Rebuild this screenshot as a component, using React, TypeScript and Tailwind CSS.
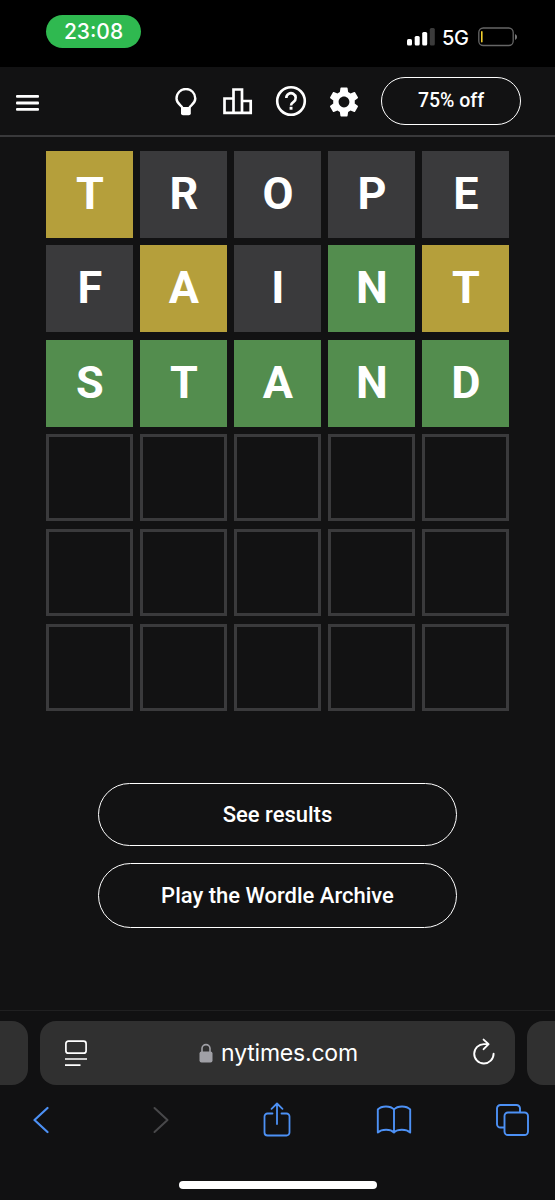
import clsx from 'clsx';

type TileState = 'present' | 'absent' | 'correct' | 'empty';

interface Tile {
  letter: string;
  state: TileState;
}

const EMPTY_ROW: Tile[] = Array.from({ length: 5 }, () => ({ letter: '', state: 'empty' }));

const rows: Tile[][] = [
  [
    { letter: 'T', state: 'present' },
    { letter: 'R', state: 'absent' },
    { letter: 'O', state: 'absent' },
    { letter: 'P', state: 'absent' },
    { letter: 'E', state: 'absent' },
  ],
  [
    { letter: 'F', state: 'absent' },
    { letter: 'A', state: 'present' },
    { letter: 'I', state: 'absent' },
    { letter: 'N', state: 'correct' },
    { letter: 'T', state: 'present' },
  ],
  [
    { letter: 'S', state: 'correct' },
    { letter: 'T', state: 'correct' },
    { letter: 'A', state: 'correct' },
    { letter: 'N', state: 'correct' },
    { letter: 'D', state: 'correct' },
  ],
  EMPTY_ROW,
  EMPTY_ROW,
  EMPTY_ROW,
];

const tileStyles: Record<TileState, string> = {
  present: 'bg-[#b59f3b]',
  absent: 'bg-[#3a3a3c]',
  correct: 'bg-[#538d4e]',
  empty: 'border-3 border-[#3a3a3c]',
};

function StatusBar() {
  return (
    <div className="flex h-[67px] items-start justify-between bg-black pl-[46px] pr-[37px] pt-[15px] font-['Inter',sans-serif]">
      <div className="flex h-[33px] w-[95px] items-center justify-center rounded-full bg-[#2fb950] pt-px text-[21px] font-medium">
        23:08
      </div>
      <div className="mt-[13px] flex h-[18px] items-center">
        <svg width="28" height="18" viewBox="0 0 28 18" fill="white">
          <rect x="0" y="11" width="5" height="6.5" rx="1.5" />
          <rect x="7.7" y="8" width="5" height="9.5" rx="1.5" />
          <rect x="15.2" y="4" width="5" height="13.5" rx="1.5" />
          <rect x="22.8" y="0" width="5" height="17.5" rx="1.5" fill="#3b3b3b" />
        </svg>
        <span className="ml-[7px] mt-px w-[28px] text-[20px] font-medium leading-none tracking-[-0.4px]">5G</span>
        <svg className="ml-2" width="40" height="20" viewBox="0 0 40 20" fill="none">
          <rect x="0.8" y="1" width="34.4" height="17.5" rx="4.5" stroke="#666" strokeWidth="1.3" />
          <rect x="3" y="4" width="1.6" height="11.5" rx="0.8" fill="#f2cf2e" />
          <path d="M37 7a3.2 3.2 0 0 1 0 6Z" fill="#777" />
        </svg>
      </div>
    </div>
  );
}

function Header() {
  return (
    <header className="flex h-[70px] items-center border-b-2 border-[#39393b] pl-4 pr-[34px]">
      <svg className="mt-[3px]" width="23" height="16" viewBox="0 0 23 16" fill="white">
        <rect width="23" height="2.8" rx="1" />
        <rect y="6.6" width="23" height="2.8" rx="1" />
        <rect y="13" width="23" height="2.8" rx="1" />
      </svg>
      <div className="ml-auto flex items-center">
        <svg className="mt-[2px]" width="22" height="28" viewBox="0 0 22 28" fill="none">
          <path
            d="M7.200 19.500C6.800 17.600 1.500 15.600 1.500 10.400a9.400 9.400 0 0 1 18.800 0c0 5.200-5.300 7.200-5.700 9.100"
            stroke="white"
            strokeWidth="2.400"
          />
          <path d="M6 19h9.800v6.200a2 2 0 0 1-2 2H8a2 2 0 0 1-2-2Z" fill="white" />
        </svg>
        <svg className="ml-[26px]" width="30" height="27" viewBox="0 0 30 27" fill="none" stroke="white" strokeWidth="2.700">
          <path d="M1.500 10.500h9v14.300h-9zM10.500 1.500h8.500v23.300h-8.500zM19 13h8.700v11.800H19z" />
        </svg>
        <svg className="ml-[22px]" width="32" height="32" viewBox="0 0 32 32" fill="none">
          <circle cx="16" cy="16" r="13.800" stroke="white" strokeWidth="2.600" />
          <path
            d="M11.300 12.900a4.700 4.700 0 1 1 7.300 3.900c-1.800 1.200-2.600 2-2.600 3.700"
            stroke="white"
            strokeWidth="2.600"
          />
          <rect x="14.600" y="21.800" width="2.900" height="2.900" fill="white" />
        </svg>
        <svg className="ml-[19px] mt-px" width="36" height="36" viewBox="0 0 24 24" fill="white">
          <path d="M19.140 12.940c.040-.300.060-.610.060-.940 0-.320-.020-.640-.070-.940l2.030-1.580a.49.49 0 0 0 .120-.610l-1.920-3.320a.488.488 0 0 0-.590-.220l-2.390.960c-.500-.380-1.030-.700-1.620-.940l-.360-2.540a.484.484 0 0 0-.480-.410h-3.840c-.240 0-.430.170-.470.410l-.360 2.540c-.590.240-1.130.570-1.620.940l-2.390-.960c-.220-.080-.470 0-.590.220L2.740 8.870c-.120.210-.080.470.120.610l2.030 1.580c-.050.300-.090.630-.090.940s.020.640.070.940l-2.030 1.580a.49.49 0 0 0-.120.610l1.920 3.320c.120.220.370.290.590.220l2.390-.960c.500.380 1.030.700 1.620.940l.360 2.540c.050.240.240.410.480.410h3.840c.240 0 .440-.170.470-.410l.360-2.540c.590-.240 1.130-.560 1.620-.940l2.390.960c.220.080.470 0 .590-.220l1.920-3.320c.120-.220.070-.470-.120-.610l-2.010-1.580zM12 15.600A3.610 3.610 0 0 1 8.400 12c0-1.980 1.620-3.600 3.600-3.600s3.600 1.620 3.600 3.600-1.620 3.600-3.600 3.600z" />
        </svg>
        <button className="ml-[19px] h-12 w-[140px] rounded-full border-[1.500px] border-white text-[19.500px] font-medium whitespace-nowrap">
          75% off
        </button>
      </div>
    </header>
  );
}

function Board() {
  return (
    <div className="mt-[13.500px] ml-[46.400px] grid w-[463px] grid-cols-5 gap-x-[7px] gap-y-[7.650px]">
      {rows.flat().map((tile, i) => (
        <div
          key={i}
          className={clsx(
            'flex h-[87px] items-center justify-center pb-[2px] text-[45px] leading-none font-bold',
            tileStyles[tile.state],
          )}
        >
          {tile.letter}
        </div>
      ))}
    </div>
  );
}

function BrowserBar() {
  return (
    <div className="mt-auto h-[190px] border-t border-[#202021] bg-[#111112] pt-[10px] font-['Inter',sans-serif]">
      <div className="flex h-16 gap-3">
        <div className="w-7 rounded-r-2xl bg-[#303030]" />
        <div className="flex w-[475px] items-center justify-between rounded-2xl bg-[#303030] pl-[25px] pr-[20px]">
          <svg width="22" height="27" viewBox="0 0 22 27" fill="none" stroke="white" strokeWidth="1.700">
            <rect x="0.900" y="1.200" width="20.200" height="12" rx="2.500" />
            <path d="M0 19h22M0 25.200h15.500" />
          </svg>
          <div className="mr-[3px] flex items-center">
            <svg width="14" height="20" viewBox="0 0 14 20" fill="none">
              <path d="M3 9V5.600a4 4 0 0 1 8 0V9" stroke="#a0a0a6" strokeWidth="1.600" />
              <rect x="0.500" y="8.500" width="13" height="11" rx="2" fill="#a0a0a6" />
            </svg>
            <span className="mt-px ml-2 text-[23px] leading-none tracking-[-0.200px]">nytimes.com</span>
          </div>
          <svg className="-mt-1" width="22" height="27" viewBox="0 0 22 27" fill="none" stroke="white" strokeWidth="1.900" strokeLinecap="round" strokeLinejoin="round">
            <path d="M20.600 15.800A9.700 9.700 0 1 1 11 6.100h4.500M10.600 1.600l5 4.500-5 5.100" />
          </svg>
        </div>
        <div className="w-7 rounded-l-2xl bg-[#303030]" />
      </div>
      <div className="mt-[17px] flex h-9 items-center justify-between pl-[23px] pr-[25px] text-[#4d91f5]">
        <div className="flex w-9 justify-center">
          <svg width="17" height="28" viewBox="0 0 17 28" fill="none" stroke="currentColor" strokeWidth="2.200" strokeLinecap="round" strokeLinejoin="round">
            <path d="M14.500 2 1.500 14l13 12" />
          </svg>
        </div>
        <div className="flex w-9 justify-center pl-1">
          <svg width="17" height="28" viewBox="0 0 17 28" fill="none" stroke="#48484a" strokeWidth="2" strokeLinecap="round" strokeLinejoin="round">
            <path d="m2.500 2 13 12-13 12" />
          </svg>
        </div>
        <div className="flex w-9 justify-center pl-px">
          <svg width="28" height="36" viewBox="0 0 28 36" fill="none" stroke="currentColor" strokeWidth="1.800" strokeLinecap="round" strokeLinejoin="round">
            <path d="M9.500 11.500H4.500a3 3 0 0 0-3 3v16a3 3 0 0 0 3 3h19a3 3 0 0 0 3-3v-16a3 3 0 0 0-3-3h-5M14 22V1.500M8.500 6.800 14 1.500l5.500 5.300" />
          </svg>
        </div>
        <svg width="36" height="30" viewBox="0 0 36 30" fill="none" stroke="currentColor" strokeWidth="1.900" strokeLinejoin="round">
          <path d="M18 4.500C14.500.400 5.500.400 1.800 4.500v23c4-3.600 12.700-3.600 16.200 0 3.500-3.600 12.200-3.600 16.200 0v-23C30.500.400 21.500.400 18 4.500ZM18 4.500v23" />
        </svg>
        <div className="flex w-9 justify-center">
          <svg width="33" height="32" viewBox="0 0 33 32" fill="none" stroke="currentColor" strokeWidth="1.900">
            <path d="M8.500 23.500H4.500a3.500 3.500 0 0 1-3.500-3.500V4.500A3.500 3.500 0 0 1 4.500 1h16A3.500 3.500 0 0 1 24 4.500v4" />
            <rect x="8.500" y="8.500" width="23.500" height="22.500" rx="3.500" />
          </svg>
        </div>
      </div>
      <div className="mx-auto mt-[43px] h-2 w-[198px] rounded-full bg-white" />
    </div>
  );
}

export default function App() {
  return (
    <div className="flex h-[1200px] w-[555px] flex-col overflow-hidden bg-[#121213] font-['Roboto',sans-serif] text-white">
      <StatusBar />
      <Header />
      <Board />
      <div className="mt-[72px] flex flex-col items-center gap-[17px] text-[22px] font-medium">
        <button className="h-[63px] w-[359px] rounded-full border-[1.500px] border-white">See results</button>
        <button className="h-[65px] w-[359px] rounded-full border-[1.500px] border-white">
          Play the Wordle Archive
        </button>
      </div>
      <BrowserBar />
    </div>
  );
}
